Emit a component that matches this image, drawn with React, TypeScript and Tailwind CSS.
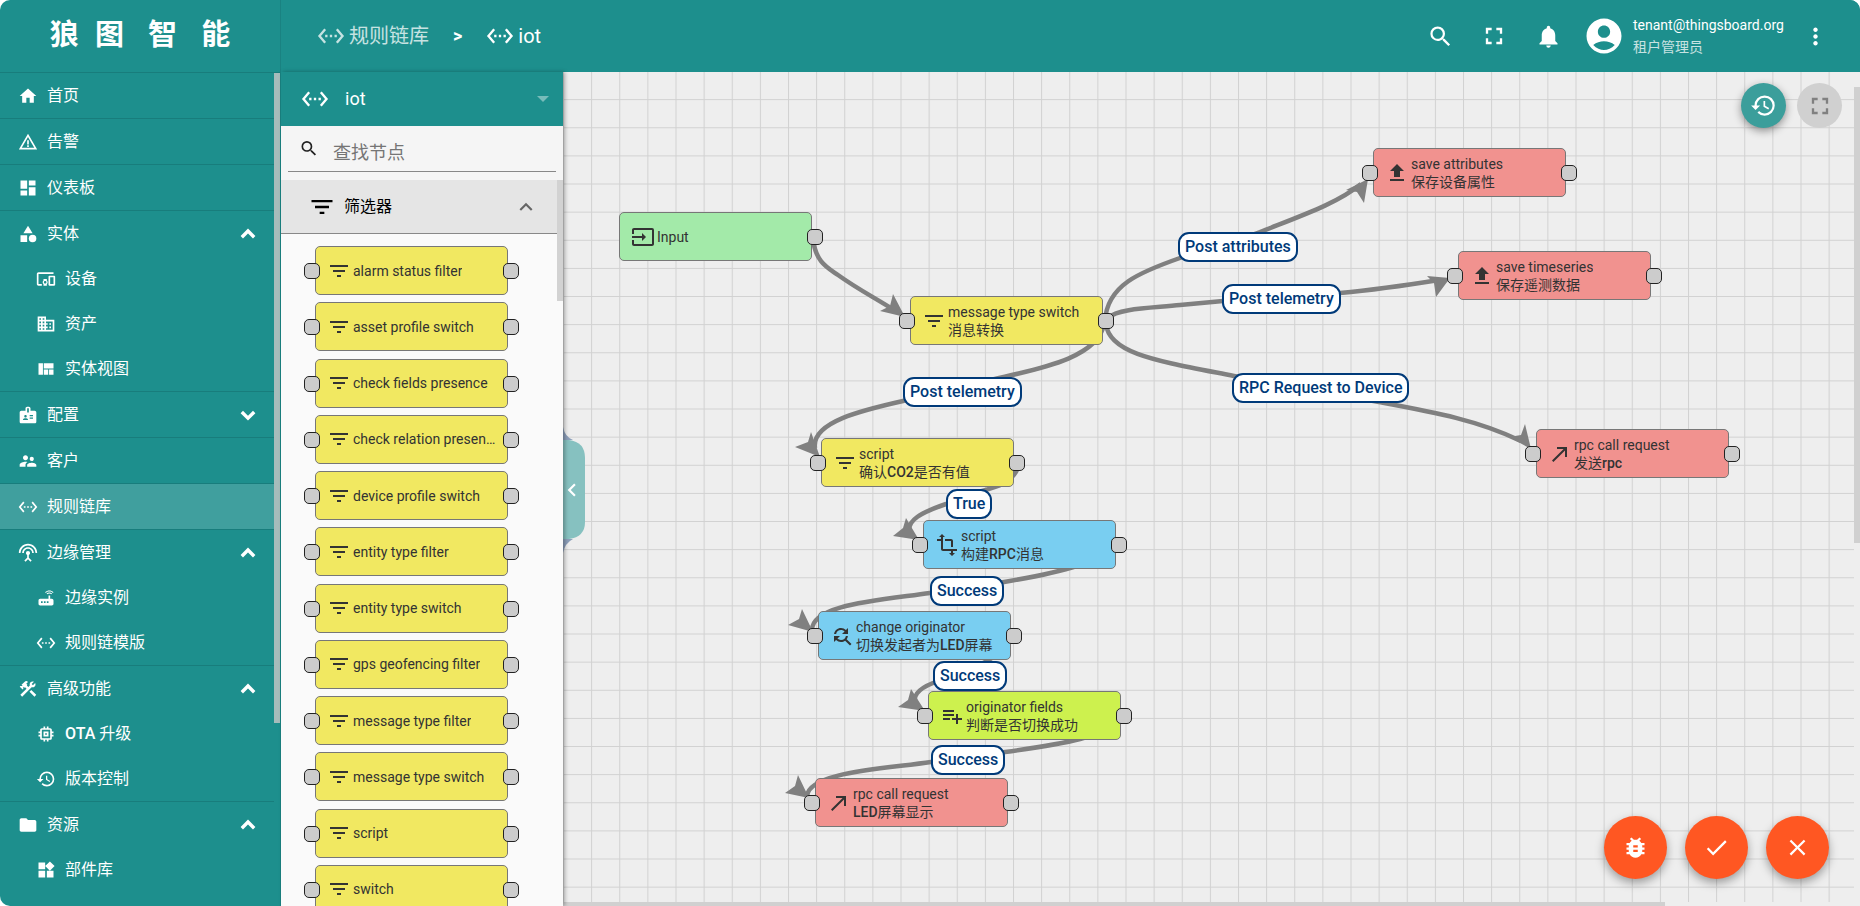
import React, { useState } from 'react';
import {
  MdAccountCircle,
  MdBadge,
  MdBugReport,
  MdCallMade,
  MdCategory,
  MdCheck,
  MdChevronLeft,
  MdClose,
  MdConstruction,
  MdDashboard,
  MdDevicesOther,
  MdDomain,
  MdExpandLess,
  MdFilterList,
  MdFindReplace,
  MdFolder,
  MdFullscreen,
  MdHistory,
  MdHome,
  MdInput,
  MdMemory,
  MdMoreVert,
  MdNotifications,
  MdPlaylistAdd,
  MdRouter,
  MdSearch,
  MdSettingsEthernet,
  MdSettingsInputAntenna,
  MdSupervisorAccount,
  MdTransform,
  MdViewQuilt,
  MdWarningAmber,
  MdWidgets,
} from 'react-icons/md';

type Icon = React.ComponentType<{ className?: string }>;

interface MenuItem {
  label: string;
  icon: Icon;
  active?: boolean;
  open?: boolean;
  children?: MenuItem[];
}

interface RuleNode {
  id: string;
  type: string;
  name?: string;
  icon: Icon;
  color: string;
  x: number;
  y: number;
  noInput?: boolean;
}

interface RuleLink {
  id: string;
  path: string;
  arrow: string;
}

interface LinkLabel {
  id: string;
  text: string;
  x: number;
  y: number;
}

const UploadIcon: Icon = ({ className }) => (
  <svg className={className} viewBox="0 0 24 24" fill="currentColor">
    <path d="M9 16h6v-6h4l-7-7-7 7h4zm-4 2h14v2H5z" />
  </svg>
);

const menu: MenuItem[] = [
  { label: '首页', icon: MdHome },
  { label: '告警', icon: MdWarningAmber },
  { label: '仪表板', icon: MdDashboard },
  {
    label: '实体',
    icon: MdCategory,
    open: true,
    children: [
      { label: '设备', icon: MdDevicesOther },
      { label: '资产', icon: MdDomain },
      { label: '实体视图', icon: MdViewQuilt },
    ],
  },
  { label: '配置', icon: MdBadge, open: false, children: [] },
  { label: '客户', icon: MdSupervisorAccount },
  { label: '规则链库', icon: MdSettingsEthernet, active: true },
  {
    label: '边缘管理',
    icon: MdSettingsInputAntenna,
    open: true,
    children: [
      { label: '边缘实例', icon: MdRouter },
      { label: '规则链模版', icon: MdSettingsEthernet },
    ],
  },
  {
    label: '高级功能',
    icon: MdConstruction,
    open: true,
    children: [
      { label: 'OTA 升级', icon: MdMemory },
      { label: '版本控制', icon: MdHistory },
    ],
  },
  {
    label: '资源',
    icon: MdFolder,
    open: true,
    children: [{ label: '部件库', icon: MdWidgets }],
  },
];

const filterNodes = [
  'alarm status filter',
  'asset profile switch',
  'check fields presence',
  'check relation presence',
  'device profile switch',
  'entity type filter',
  'entity type switch',
  'gps geofencing filter',
  'message type filter',
  'message type switch',
  'script',
  'switch',
];

const nodes: RuleNode[] = [
  { id: 'input', type: 'Input', icon: MdInput, color: 'bg-[#a3eaa9]', x: 56, y: 140, noInput: true },
  { id: 'switch', type: 'message type switch', name: '消息转换', icon: MdFilterList, color: 'bg-[#f1e861]', x: 347, y: 224 },
  { id: 'attrs', type: 'save attributes', name: '保存设备属性', icon: UploadIcon, color: 'bg-[#f1928f]', x: 810, y: 76 },
  { id: 'series', type: 'save timeseries', name: '保存遥测数据', icon: UploadIcon, color: 'bg-[#f1928f]', x: 895, y: 179 },
  { id: 'rpc', type: 'rpc call request', name: '发送rpc', icon: MdCallMade, color: 'bg-[#f1928f]', x: 973, y: 357 },
  { id: 'co2', type: 'script', name: '确认CO2是否有值', icon: MdFilterList, color: 'bg-[#f1e861]', x: 258, y: 366 },
  { id: 'build', type: 'script', name: '构建RPC消息', icon: MdTransform, color: 'bg-[#79cef1]', x: 360, y: 448 },
  { id: 'origin', type: 'change originator', name: '切换发起者为LED屏幕', icon: MdFindReplace, color: 'bg-[#79cef1]', x: 255, y: 539 },
  { id: 'fields', type: 'originator fields', name: '判断是否切换成功', icon: MdPlaylistAdd, color: 'bg-[#cdf14e]', x: 365, y: 619 },
  { id: 'led', type: 'rpc call request', name: 'LED屏幕显示', icon: MdCallMade, color: 'bg-[#f1928f]', x: 252, y: 706 },
];

const links: RuleLink[] = [
  { id: 'l1', path: 'M250 166 C252 190 265 196 275 203 C293 216 312 226 331 238', arrow: 'M342 245 L330 222 L327 234 L317 239Z' },
  { id: 'l2', path: 'M542 249 C544 213 577 200 617 186 C640 178 675 168 697 160 C740 143 775 131 798 112', arrow: 'M805 107 L783 118 L794 120 L801 131Z' },
  { id: 'l3', path: 'M545 246 C555 236 590 236 617 233 L660 229 L777 221 C810 218 845 213 876 208', arrow: 'M887 206 L864 204 L871 211 L873 225Z' },
  { id: 'l4', path: 'M543 252 C546 282 595 289 671 304 C730 315 770 322 816 330 C870 340 915 348 958 369', arrow: 'M968 377 L962 352 L958 363 L946 365Z' },
  { id: 'l5', path: 'M541 252 C535 285 480 296 436 306 L340 329 C300 338 248 350 252 376', arrow: 'M257 385 L248 360 L245 370 L232 375Z' },
  { id: 'l6', path: 'M455 395 C450 412 430 416 415 420 L383 432 C360 440 342 448 347 462', arrow: 'M356 468 L343 446 L340 456 L330 464Z' },
  { id: 'l7', path: 'M555 470 C540 490 500 500 441 510 L367 521 C310 529 249 533 249 558', arrow: 'M250 560 L239 537 L236 547 L225 553Z' },
  { id: 'l8', path: 'M450 560 C440 590 400 600 370 611 C355 617 348 625 354 633', arrow: 'M362 639 L348 617 L345 628 L335 635Z' },
  { id: 'l9', path: 'M560 645 C545 665 500 672 442 680 L368 690 C320 697 246 700 244 724', arrow: 'M246 726 L235 703 L232 714 L222 721Z' },
];

const labels: LinkLabel[] = [
  { id: 'b1', text: 'Post attributes', x: 615, y: 160 },
  { id: 'b2', text: 'Post telemetry', x: 659, y: 212 },
  { id: 'b3', text: 'RPC Request to Device', x: 669, y: 301 },
  { id: 'b4', text: 'Post telemetry', x: 340, y: 305 },
  { id: 'b5', text: 'True', x: 383, y: 417 },
  { id: 'b6', text: 'Success', x: 367, y: 504 },
  { id: 'b7', text: 'Success', x: 370, y: 589 },
  { id: 'b8', text: 'Success', x: 368, y: 673 },
];

// Latin runs are set in medium weight, Chinese stays regular
const MixedText: React.FC<{ text: string }> = ({ text }) => (
  <>
    {text.split(/([A-Za-z0-9]+)/).map((part, i) =>
      i % 2 === 1 ? (
        <span key={i} className="font-medium">
          {part}
        </span>
      ) : (
        part
      )
    )}
  </>
);

const Chevron: React.FC<{ open: boolean }> = ({ open }) => (
  <svg className="ml-auto h-4 w-4" viewBox="0 0 16 16" fill="none" stroke="currentColor" strokeWidth="3.4">
    <path d={open ? 'M1.8 11.2 8 5l6.200 6.200' : 'M1.800 5 8 11.200 14.200 5'} />
  </svg>
);

const Port: React.FC<{ className: string }> = ({ className }) => (
  <span className={`absolute top-4 h-4 w-4 rounded-[5px] border border-[#222] bg-[#ccc] ${className}`} />
);

const NodeBody: React.FC<{ type: string; name?: string; icon: Icon; color: string; noInput?: boolean }> = ({
  type,
  name,
  icon: NodeIcon,
  color,
  noInput,
}) => (
  <div className={`relative flex h-[49px] w-[193px] items-center gap-0.5 rounded-[5px] border border-[#777] px-[11px] text-[#333] ${color}`}>
    <NodeIcon className="h-6 w-6 shrink-0" />
    <div className="min-w-0 text-sm leading-[18px]">
      <div className="truncate">{type}</div>
      {name && (
        <div className="truncate">
          <MixedText text={name} />
        </div>
      )}
    </div>
    {!noInput && <Port className="-left-3" />}
    <Port className="-right-3" />
  </div>
);

const Sidebar: React.FC = () => (
  <aside className="relative flex w-[281px] shrink-0 flex-col overflow-hidden border-r border-[#1a8281] text-white">
    <div className="flex h-[73px] shrink-0 items-center justify-center border-b border-[#187d7c]">
      <h1 className="font-['Liberation_Sans','Noto_Sans_CJK_SC',sans-serif] text-[29px] font-bold whitespace-pre">狼  图   智   能</h1>
    </div>
    <nav className="relative min-h-0 flex-1 overflow-hidden pr-1.5">
      <ul>
        {menu.map((item) => (
          <li key={item.label} className="border-b border-[#187d7c] last:border-b-0">
            <a
              href="#"
              className={`flex h-[45px] items-center gap-[9px] px-[18px] text-base ${item.active ? 'bg-[#409f9e]' : ''}`}
            >
              <item.icon className="h-5 w-5 shrink-0" />
              <span>{item.label}</span>
              {item.children && <Chevron open={!!item.open} />}
            </a>
            {item.open && (
              <ul>
                {item.children?.map((child) => (
                  <li key={child.label}>
                    <a href="#" className="flex h-[45px] items-center gap-[9px] pl-9 text-base">
                      <child.icon className="h-5 w-5 shrink-0" />
                      <span>
                        <MixedText text={child.label} />
                      </span>
                    </a>
                  </li>
                ))}
              </ul>
            )}
          </li>
        ))}
      </ul>
      <div className="absolute top-0 right-0 h-[650px] w-1.5 bg-[#a6bcbb]" />
    </nav>
  </aside>
);

const Toolbar: React.FC = () => (
  <header className="flex h-[72px] shrink-0 items-center bg-[#1d8f8d] pr-[18px] pl-9 text-white">
    <nav className="flex items-center text-xl">
      <a href="#" className="flex items-center gap-1 opacity-75">
        <MdSettingsEthernet className="h-7 w-7" />
        <span>规则链库</span>
      </a>
      <span className="mx-6 text-lg font-bold">&gt;</span>
      <a href="#" className="flex items-center gap-1">
        <MdSettingsEthernet className="h-7 w-7" />
        <span>iot</span>
      </a>
    </nav>
    <div className="ml-auto flex items-center">
      <button aria-label="搜索" className="flex w-[54px] justify-center">
        <MdSearch className="h-[27px] w-[27px]" />
      </button>
      <button aria-label="全屏" className="flex w-[54px] justify-center">
        <MdFullscreen className="h-7 w-7" />
      </button>
      <button aria-label="通知" className="flex w-[54px] justify-center">
        <MdNotifications className="h-[27px] w-[27px]" />
      </button>
      <MdAccountCircle className="ml-2 h-[42px] w-[42px]" />
      <div className="ml-2 min-w-[155px] text-sm leading-[22px]">
        <div>tenant@thingsboard.org</div>
        <div className="opacity-75">租户管理员</div>
      </div>
      <button aria-label="更多" className="flex w-[54px] justify-center">
        <MdMoreVert className="h-[27px] w-[27px]" />
      </button>
    </div>
  </header>
);

const NodeLibrary: React.FC = () => {
  const [search, setSearch] = useState('');

  const visible = filterNodes.filter((n) => n.includes(search.toLowerCase()));

  return (
    <section className="relative z-10 flex w-[282px] shrink-0 flex-col bg-[#fafafa] shadow-[2px_0_4px_rgba(0,0,0,0.3)]">
      <button className="flex h-[54px] shrink-0 items-center bg-[#1d8f8d] pr-[14px] pl-5 text-lg text-white">
        <MdSettingsEthernet className="h-7 w-7" />
        <span className="ml-4">iot</span>
        <svg className="ml-auto h-[6px] w-3 opacity-40" viewBox="0 0 12 6" fill="currentColor">
          <path d="M0 0h12L6 6z" />
        </svg>
      </button>
      <div className="h-[54px] shrink-0 bg-[#f5f5f5] px-[7px]">
        <label className="flex h-[46px] items-center border-b border-[#888] pl-[11px]">
          <MdSearch className="h-[23px] w-[23px] text-[#222]" />
          <input
            type="text"
            aria-label="查找节点"
            placeholder="查找节点"
            value={search}
            onChange={(e) => setSearch(e.target.value)}
            className="mt-2 ml-3.5 w-full min-w-0 bg-transparent text-lg outline-none placeholder:text-[#757575]"
          />
        </label>
      </div>
      <div className="relative min-h-0 flex-1 overflow-hidden">
        <button className="flex h-[54px] w-full items-center border-b border-[#888] bg-[#e5e5e5] pr-6 pl-[27px] text-base text-black">
          <MdFilterList className="h-7 w-7" />
          <span className="ml-2">筛选器</span>
          <MdExpandLess className="ml-auto h-[26px] w-[26px] text-[#666]" />
        </button>
        {/* every node keeps the same share of the list height */}
        <div className="grid h-[687px] auto-rows-fr pt-3 pl-[34px]">
          {visible.map((n) => (
            <NodeBody key={n} type={n} icon={MdFilterList} color="bg-[#f1e861]" />
          ))}
        </div>
        <div className="absolute top-0 right-0 h-[121px] w-1.5 bg-[#d2d2d2]" />
      </div>
    </section>
  );
};

const RuleCanvas: React.FC = () => (
  <section className="relative min-w-0 flex-1 overflow-hidden bg-[#eee]">
    <svg className="absolute inset-0 h-full w-full">
      <defs>
        <pattern id="grid" width="28.125" height="28.125" patternUnits="userSpaceOnUse">
          <path d="M0.500 0V28.125M0 27.625H28.125" stroke="#000" strokeOpacity="0.12" fill="none" />
        </pattern>
      </defs>
      <rect width="100%" height="100%" fill="url(#grid)" />
      {links.map((link) => (
        <g key={link.id}>
          <path d={link.path} fill="none" stroke="#808080" strokeWidth="4.5" />
          <path d={link.arrow} fill="#808080" />
        </g>
      ))}
    </svg>

    {nodes.map((node) => (
      <div key={node.id} className="absolute" style={{ left: node.x, top: node.y }}>
        <NodeBody type={node.type} name={node.name} icon={node.icon} color={node.color} noInput={node.noInput} />
      </div>
    ))}

    {labels.map((label) => (
      <div
        key={label.id}
        className="absolute rounded-[11px] border-2 border-[#003a79] bg-white px-[5px] text-base leading-[26px] font-medium whitespace-nowrap text-[#003a79]"
        style={{ left: label.x, top: label.y }}
      >
        {label.text}
      </div>
    ))}

    {/* collapse handle of the node library */}
    <button aria-label="收起" className="absolute top-[355px] left-0 h-[126px] w-[22px] text-white">
      <svg className="absolute inset-0 h-full w-full" viewBox="0 0 22 126">
        <path d="M0 0Q2 10 10 13H0zM0 126Q2 116 10 112H0z" fill="#8c9fba" />
        <path d="M0 13H6Q22 15 22 31V95Q22 110 6 112H0z" fill="#86c1c0" />
      </svg>
      <MdChevronLeft className="absolute top-[50px] -left-1 h-[26px] w-[26px]" />
    </button>

    {/* scroll bars */}
    <div className="absolute inset-y-0 right-0 w-1.5 bg-[#eee]">
      <div className="mt-[15px] h-[456px] bg-[#d0d0d0]" />
    </div>
    <div className="absolute inset-x-0 bottom-0 h-1 bg-[#eee]">
      <div className="h-full w-[85%] bg-[#d0d0d0]" />
    </div>

    <div className="absolute top-[11px] right-[18px] flex gap-[11px]">
      <button
        aria-label="版本控制"
        className="flex h-[45px] w-[45px] items-center justify-center rounded-full bg-[#3b9e9b] text-white shadow-[0_3px_8px_rgba(0,0,0,0.4)]"
      >
        <MdHistory className="h-[27px] w-[27px]" />
      </button>
      <button aria-label="展开" className="flex h-[45px] w-[45px] items-center justify-center rounded-full bg-[#d0d0d0] text-[#808080]">
        <MdFullscreen className="h-7 w-7" />
      </button>
    </div>

    <div className="absolute right-[31px] bottom-[27px] flex gap-[18px] text-white">
      {[
        { label: '调试', icon: MdBugReport },
        { label: '保存', icon: MdCheck },
        { label: '取消', icon: MdClose },
      ].map((action) => (
        <button
          key={action.label}
          aria-label={action.label}
          className="flex h-[63px] w-[63px] items-center justify-center rounded-full bg-[#ff5722] shadow-[0_4px_10px_rgba(0,0,0,0.35)]"
        >
          <action.icon className="h-[27px] w-[27px]" />
        </button>
      ))}
    </div>
  </section>
);

const App: React.FC = () => (
  <div className="bg-white font-[Roboto,'Noto_Sans_CJK_SC',sans-serif]">
    <div className="flex h-screen overflow-hidden rounded-t-[10px] rounded-bl-[10px] bg-[#1d8f8d]">
      <Sidebar />
      <div className="flex min-w-0 flex-1 flex-col">
        <Toolbar />
        <main className="flex min-h-0 flex-1">
          <NodeLibrary />
          <RuleCanvas />
        </main>
      </div>
    </div>
  </div>
);

export default App;
